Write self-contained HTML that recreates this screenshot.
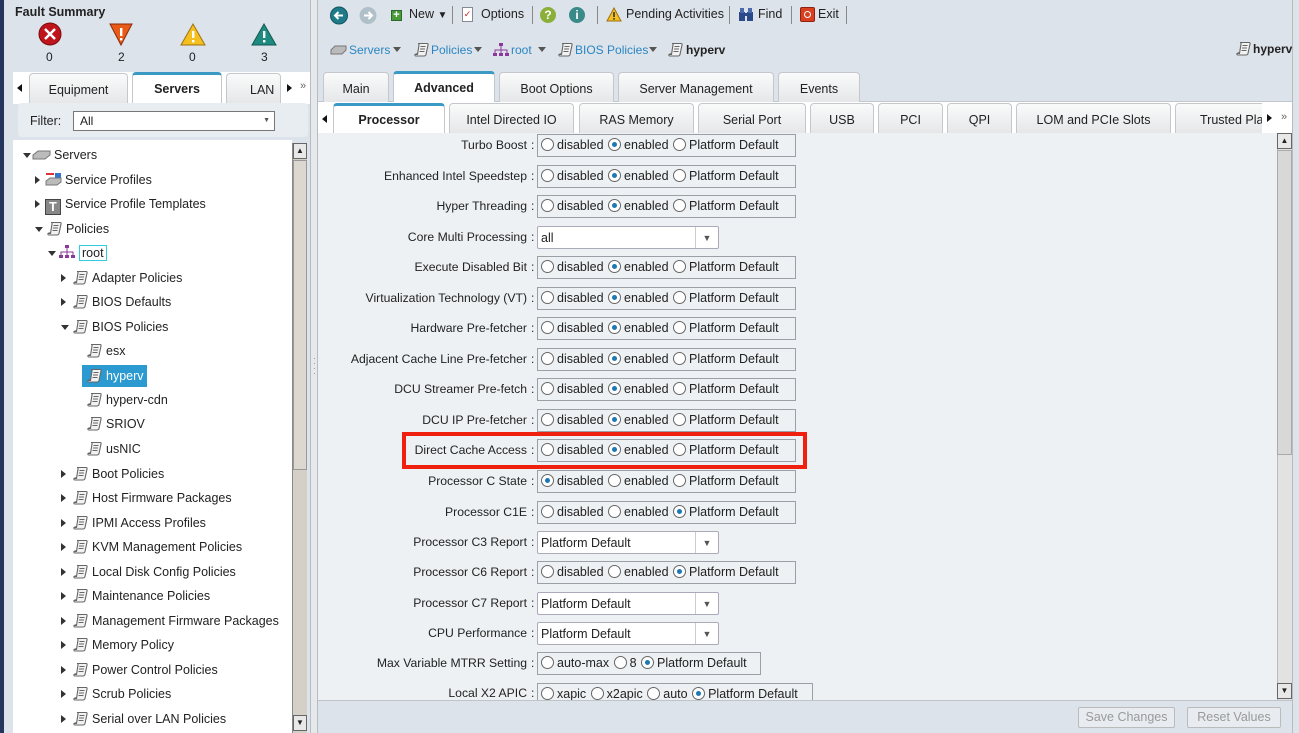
<!DOCTYPE html>
<html><head><meta charset="utf-8"><style>
*{box-sizing:border-box}
body{margin:0;width:1299px;height:733px;overflow:hidden;font-family:"Liberation Sans",sans-serif;font-size:12px;color:#222;background:#dde3ea;position:relative}
.a{position:absolute}
.tab{position:absolute;height:31px;border:1px solid #c4c8cc;border-bottom:none;border-radius:4px 4px 0 0;background:linear-gradient(#fafafa,#e4e6e8);text-align:center;line-height:32px;font-size:12.5px}
.tab.on{background:#fff;border-top:3px solid #3a9ac4;font-weight:bold;line-height:28px}
.ti{position:absolute;font-size:12.5px;height:20px;line-height:20px;white-space:nowrap}
.ar{display:inline-block;width:0;height:0;border-top:4px solid transparent;border-bottom:4px solid transparent;border-left:5px solid #333;position:absolute}
.ad{display:inline-block;width:0;height:0;border-left:4px solid transparent;border-right:4px solid transparent;border-top:5px solid #333;position:absolute}
.pi{display:inline-block;width:15px;height:15px;vertical-align:-3px;margin-right:4px}
.lb{position:absolute;right:772px;text-align:right;white-space:nowrap;font-size:12.2px}
.col{position:absolute;left:531px}
.bx{position:absolute;left:537px;height:23px;border:1px solid #9aa0a6;background:#eef1f4;white-space:nowrap;font-size:12.5px;line-height:21px;padding-left:2px}
.r{display:inline-block;width:13px;height:13px;border:1px solid #666;border-radius:50%;background:#fff;vertical-align:-2px;margin:0 3px 0 1px;position:relative}
.r.s:after{content:"";position:absolute;left:3px;top:3px;width:5px;height:5px;border-radius:50%;background:#1e78b4}
.sel{position:absolute;left:537px;width:182px;height:23px;border:1px solid #aab;background:#fff;border-radius:2px;font-size:12.5px;line-height:22px;padding-left:3px}
.sel:after{content:"▼";position:absolute;right:0;top:0;width:22px;height:21px;border-left:1px solid #ccc;font-size:9px;text-align:center;color:#555}
.tb{position:absolute;top:7px;font-size:12.5px;white-space:nowrap}
.sp{position:absolute;top:6px;width:1px;height:18px;background:#888}
.bc{position:absolute;top:43px;font-size:12px;color:#2a86c2;white-space:nowrap}
.dv{position:absolute;top:47px;border-left:4px solid transparent;border-right:4px solid transparent;border-top:5px solid #555}
</style></head><body>
<svg width="0" height="0" style="position:absolute"><defs>
<symbol id="sc" viewBox="0 0 15 15"><path d="M4 1.5H13Q14.5 1.5 14 3L12 12.5Q11.5 14 10 14H2Q0.5 14 1 12.5H3.5L5 3Q5.3 1.5 4 1.5Z" fill="#f2f2f2" stroke="#666" stroke-width="1.1"/><path d="M6.5 4.5H11.5M6 7H11M5.5 9.5H10.5M1 12.5Q3 11 3.5 12.5" stroke="#666" stroke-width="1" fill="none"/></symbol>
</defs></svg>
<!-- LEFT -->
<div class="a" style="left:0;top:0;width:4px;height:733px;background:#26355e"></div>
<div class="a" style="left:4px;top:0;width:306px;height:733px;background:#dce3ea"></div>
<div class="a" style="left:15px;top:5px;font-weight:bold;font-size:12.5px">Fault Summary</div>
<svg class="a" style="left:38px;top:22px" width="250" height="26">
<circle cx="12" cy="12" r="11" fill="#c0141c" stroke="#7a0a0e"/><path d="M7 7L17 17M17 7L7 17" stroke="#fff" stroke-width="2.5"/>
<path d="M72 2L94 2L83 23Z" fill="#e85a18" stroke="#8a2a08"/><rect x="82" y="6" width="2.4" height="8" fill="#fff"/><rect x="82" y="16" width="2.4" height="2.4" fill="#fff"/>
<path d="M155 2L167 23L143 23Z" fill="#f4c020" stroke="#a07010"/><rect x="154" y="9" width="2.4" height="7" fill="#fff"/><rect x="154" y="18" width="2.4" height="2.4" fill="#fff"/>
<path d="M226 2L238 23L214 23Z" fill="#1e8a80" stroke="#0e5a52"/><rect x="225" y="9" width="2.4" height="7" fill="#fff"/><rect x="225" y="18" width="2.4" height="2.4" fill="#fff"/>
</svg>
<div class="a" style="left:46px;top:50px">0</div><div class="a" style="left:118px;top:50px">2</div><div class="a" style="left:189px;top:50px">0</div><div class="a" style="left:261px;top:50px">3</div>
<div class="a" style="left:13px;top:72px;width:297px;height:32px;background:#fff"></div>
<span class="a" style="left:17px;top:84px;border-top:4px solid transparent;border-bottom:4px solid transparent;border-right:5px solid #111"></span>
<div class="tab" style="left:29px;top:73px;width:99px">Equipment</div>
<div class="tab on" style="left:132px;top:72px;width:90px">Servers</div>
<div class="tab" style="left:226px;top:73px;width:55px;text-align:left;padding-left:23px">LAN</div>
<span class="a" style="left:287px;top:84px;border-top:4px solid transparent;border-bottom:4px solid transparent;border-left:5px solid #111"></span>
<div class="a" style="left:300px;top:80px;font-size:11px;color:#666">»</div>
<div class="a" style="left:18px;top:103px;width:290px;height:34px;background:#e8edf1;border-radius:4px"></div>
<div class="a" style="left:30px;top:114px;font-size:12.5px">Filter:</div>
<div class="a" style="left:73px;top:111px;width:202px;height:20px;border:1px solid #777;background:#fff;padding-left:6px;line-height:18px">All<span style="position:absolute;right:4px;top:0;font-size:7px;color:#555">▼</span></div>
<div class="a" style="left:13px;top:140px;width:279px;height:593px;background:#fff"></div>
<div class="a" style="left:292px;top:143px;width:15px;height:590px;background:#d4d0c8;border-left:1px solid #888"></div>
<div class="a" style="left:293px;top:143px;width:14px;height:16px;background:#e8e8e8;border:1px solid #666;font-size:8px;text-align:center;line-height:14px">▲</div>
<div class="a" style="left:293px;top:160px;width:14px;height:310px;background:#dcd8d0;border:1px solid #999"></div>
<div class="a" style="left:293px;top:715px;width:14px;height:16px;background:#e8e8e8;border:1px solid #666;font-size:8px;text-align:center;line-height:14px">▼</div>
<div class="a" style="left:310px;top:0;width:8px;height:733px;background:#e6e9ec;border-left:1px solid #b8bcc0;border-right:1px solid #b8bcc0"></div>
<div class="a" style="left:313px;top:356px;font-size:8px;line-height:5px;color:#777">·<br>·<br>·<br>·</div>
<!-- tree -->
<span class="ad" style="left:23px;top:153px"></span>
<div class="ti" style="left:32px;top:145px"><svg width="19" height="12" style="vertical-align:-2px;margin-right:3px"><path d="M1 6L6 2L18 2L18 6L13 10L1 10Z" fill="#bbb" stroke="#777"/></svg>Servers</div>
<span class="ar" style="left:35px;top:176px"></span>
<div class="ti" style="left:45px;top:170px"><svg width="17" height="14" style="vertical-align:-2px;margin-right:3px"><rect x="1" y="1" width="8" height="2" fill="#d33"/><rect x="10" y="1" width="6" height="7" fill="#37c"/><path d="M1 9L5 6L16 6L16 10L12 13L1 13Z" fill="#bbb" stroke="#777"/></svg>Service Profiles</div>
<span class="ar" style="left:35px;top:200px"></span>
<div class="ti" style="left:45px;top:194px"><span style="display:inline-block;width:16px;height:16px;background:#888;color:#fff;border:1px solid #444;font-weight:bold;text-align:center;line-height:14px;vertical-align:-3px;margin-right:4px">T</span>Service Profile Templates</div>
<span class="ad" style="left:35px;top:227px"></span>
<div class="ti" style="left:47px;top:219px"><svg class="pi"><use href="#sc"/></svg>Policies</div>
<span class="ad" style="left:48px;top:251px"></span>
<div class="ti" style="left:59px;top:243px"><svg width="16" height="14" style="vertical-align:-2px;margin-right:4px"><g fill="#8a3a9a"><rect x="6" y="0" width="4" height="3"/><rect x="0" y="10" width="4" height="3"/><rect x="6" y="10" width="4" height="3"/><rect x="12" y="10" width="4" height="3"/></g><path d="M8 3V10M2 10V7H14V10" stroke="#8a3a9a" fill="none"/></svg><span style="border:1px solid #3cd;padding:0 2px">root</span></div>
<span class="ar" style="left:61px;top:274px"></span><div class="ti" style="left:73px;top:268px"><svg class="pi"><use href="#sc"/></svg>Adapter Policies</div>
<span class="ar" style="left:61px;top:298px"></span><div class="ti" style="left:73px;top:292px"><svg class="pi"><use href="#sc"/></svg>BIOS Defaults</div>
<span class="ad" style="left:61px;top:325px"></span><div class="ti" style="left:73px;top:317px"><svg class="pi"><use href="#sc"/></svg>BIOS Policies</div>
<div class="ti" style="left:87px;top:341px"><svg class="pi"><use href="#sc"/></svg>esx</div>
<div class="ti" style="left:82px;top:365px;width:65px;height:22px;background:#2a9ad0;color:#fff;padding-left:5px;line-height:22px"><svg class="pi"><use href="#sc"/></svg>hyperv</div>
<div class="ti" style="left:87px;top:390px"><svg class="pi"><use href="#sc"/></svg>hyperv-cdn</div>
<div class="ti" style="left:87px;top:414px"><svg class="pi"><use href="#sc"/></svg>SRIOV</div>
<div class="ti" style="left:87px;top:439px"><svg class="pi"><use href="#sc"/></svg>usNIC</div>
<span class="ar" style="left:61px;top:470px"></span><div class="ti" style="left:73px;top:464px"><svg class="pi"><use href="#sc"/></svg>Boot Policies</div>
<span class="ar" style="left:61px;top:494px"></span><div class="ti" style="left:73px;top:488px"><svg class="pi"><use href="#sc"/></svg>Host Firmware Packages</div>
<span class="ar" style="left:61px;top:519px"></span><div class="ti" style="left:73px;top:513px"><svg class="pi"><use href="#sc"/></svg>IPMI Access Profiles</div>
<span class="ar" style="left:61px;top:543px"></span><div class="ti" style="left:73px;top:537px"><svg class="pi"><use href="#sc"/></svg>KVM Management Policies</div>
<span class="ar" style="left:61px;top:568px"></span><div class="ti" style="left:73px;top:562px"><svg class="pi"><use href="#sc"/></svg>Local Disk Config Policies</div>
<span class="ar" style="left:61px;top:592px"></span><div class="ti" style="left:73px;top:586px"><svg class="pi"><use href="#sc"/></svg>Maintenance Policies</div>
<span class="ar" style="left:61px;top:617px"></span><div class="ti" style="left:73px;top:611px"><svg class="pi"><use href="#sc"/></svg>Management Firmware Packages</div>
<span class="ar" style="left:61px;top:641px"></span><div class="ti" style="left:73px;top:635px"><svg class="pi"><use href="#sc"/></svg>Memory Policy</div>
<span class="ar" style="left:61px;top:666px"></span><div class="ti" style="left:73px;top:660px"><svg class="pi"><use href="#sc"/></svg>Power Control Policies</div>
<span class="ar" style="left:61px;top:690px"></span><div class="ti" style="left:73px;top:684px"><svg class="pi"><use href="#sc"/></svg>Scrub Policies</div>
<span class="ar" style="left:61px;top:715px"></span><div class="ti" style="left:73px;top:709px"><svg class="pi"><use href="#sc"/></svg>Serial over LAN Policies</div>
<!-- RIGHT toolbar -->
<svg class="a" style="left:330px;top:6px" width="50" height="20"><circle cx="9" cy="9.5" r="8.5" fill="#1f7a8a" stroke="#135560"/><path d="M13 9.5H5M8.5 6L5 9.5L8.5 13" stroke="#fff" stroke-width="2" fill="none"/><circle cx="38" cy="9.5" r="8.5" fill="#b0c0c8"/><path d="M34 9.5H42M38.5 6L42 9.5L38.5 13" stroke="#fff" stroke-width="2" fill="none"/></svg>
<span class="a" style="left:391px;top:10px;width:11px;height:11px;background:#4a9a3a;border:1px solid #2a6a2a;color:#fff;font-size:11px;line-height:9px;text-align:center;font-weight:bold">+</span>
<div class="tb" style="left:409px">New <span style="font-size:10px">▼</span></div>
<div class="sp" style="left:452px"></div>
<span class="a" style="left:462px;top:7px;width:11px;height:15px;border:1px solid #889;background:#fff;font-size:9px;color:#c22;line-height:13px;text-align:center">✓</span>
<div class="tb" style="left:481px">Options</div>
<div class="sp" style="left:532px"></div>
<span class="a" style="left:540px;top:7px;width:16px;height:16px;border-radius:50%;background:#8ab03a;color:#fff;font-weight:bold;text-align:center;font-size:12px;line-height:16px">?</span>
<span class="a" style="left:569px;top:7px;width:16px;height:16px;border-radius:50%;background:#3a8a8a;color:#fff;font-weight:bold;text-align:center;font-size:12px;line-height:16px">i</span>
<div class="sp" style="left:597px"></div>
<svg class="a" style="left:606px;top:7px" width="16" height="15"><path d="M8 1L15 14H1Z" fill="#f4c020" stroke="#a07010"/><rect x="7.2" y="5" width="1.6" height="5" fill="#333"/><rect x="7.2" y="11" width="1.6" height="1.6" fill="#333"/></svg>
<div class="tb" style="left:626px">Pending Activities</div>
<div class="sp" style="left:729px"></div>
<svg class="a" style="left:738px;top:7px" width="16" height="15"><rect x="1" y="5" width="6" height="9" fill="#2a4a8a"/><rect x="9" y="5" width="6" height="9" fill="#2a4a8a"/><rect x="2" y="1" width="4" height="5" fill="#4a6aaa"/><rect x="10" y="1" width="4" height="5" fill="#4a6aaa"/><rect x="6" y="6" width="4" height="3" fill="#2a4a8a"/></svg>
<div class="tb" style="left:758px">Find</div>
<div class="sp" style="left:791px"></div>
<span class="a" style="left:800px;top:7px;width:15px;height:15px;background:#d84020;border:1px solid #902010;border-radius:2px"><span style="position:absolute;left:3px;top:3px;width:7px;height:7px;border:1.5px solid #fff;border-radius:50%"></span></span>
<div class="tb" style="left:818px">Exit</div>
<div class="sp" style="left:846px"></div>
<!-- breadcrumb -->
<svg class="a" style="left:330px;top:45px" width="17" height="10"><path d="M1 5L5 1L16 1L16 5L12 9L1 9Z" fill="#bbb" stroke="#777"/></svg>
<div class="bc" style="left:349px">Servers</div><span class="dv" style="left:393px"></span>
<svg class="a" style="left:414px;top:42px" width="15" height="15"><use href="#sc"/></svg>
<div class="bc" style="left:431px">Policies</div><span class="dv" style="left:474px"></span>
<svg class="a" style="left:493px;top:43px" width="16" height="14"><g fill="#8a3a9a"><rect x="6" y="0" width="4" height="3"/><rect x="0" y="10" width="4" height="3"/><rect x="6" y="10" width="4" height="3"/><rect x="12" y="10" width="4" height="3"/></g><path d="M8 3V10M2 10V7H14V10" stroke="#8a3a9a" fill="none"/></svg>
<div class="bc" style="left:511px">root</div><span class="dv" style="left:538px"></span>
<svg class="a" style="left:558px;top:42px" width="15" height="15"><use href="#sc"/></svg>
<div class="bc" style="left:575px">BIOS Policies</div><span class="dv" style="left:649px"></span>
<svg class="a" style="left:668px;top:42px" width="15" height="15"><use href="#sc"/></svg>
<div class="bc" style="left:686px;color:#222;font-weight:bold">hyperv</div>
<svg class="a" style="left:1236px;top:41px" width="15" height="15"><use href="#sc"/></svg>
<div class="a" style="left:1253px;top:42px;font-size:12px;font-weight:bold">hyperv</div>
<!-- tabs -->
<div class="a" style="left:318px;top:101px;width:974px;height:1px;background:#c4c8cc"></div>
<div class="tab" style="left:323px;top:72px;width:66px">Main</div>
<div class="tab on" style="left:393px;top:71px;width:102px">Advanced</div>
<div class="tab" style="left:499px;top:72px;width:115px">Boot Options</div>
<div class="tab" style="left:618px;top:72px;width:156px">Server Management</div>
<div class="tab" style="left:778px;top:72px;width:82px">Events</div>
<div class="a" style="left:318px;top:102px;width:974px;height:31px;background:#fff"></div>
<span class="a" style="left:322px;top:115px;border-top:4px solid transparent;border-bottom:4px solid transparent;border-right:5px solid #111"></span>
<div class="tab" style="left:333px;top:103px;width:112px;background:#fff;border-top:3px solid #3a9ac4;font-weight:bold;line-height:28px">Processor</div>
<div class="tab" style="left:449px;top:103px;width:125px">Intel Directed IO</div>
<div class="tab" style="left:579px;top:103px;width:115px">RAS Memory</div>
<div class="tab" style="left:698px;top:103px;width:108px">Serial Port</div>
<div class="tab" style="left:810px;top:103px;width:64px">USB</div>
<div class="tab" style="left:878px;top:103px;width:65px">PCI</div>
<div class="tab" style="left:947px;top:103px;width:65px">QPI</div>
<div class="tab" style="left:1016px;top:103px;width:155px">LOM and PCIe Slots</div>
<div class="tab" style="left:1175px;top:103px;width:120px;text-align:left;padding-left:24px;overflow:hidden">Trusted Pla</div>
<div class="a" style="left:1262px;top:103px;width:30px;height:30px;background:#fff"></div>
<span class="a" style="left:1267px;top:114px;border-top:4px solid transparent;border-bottom:4px solid transparent;border-left:5px solid #111"></span>
<div class="a" style="left:1281px;top:111px;font-size:11px;color:#666">»</div>
<!-- content -->
<div class="a" style="left:318px;top:133px;width:974px;height:567px;background:#eef1f4"></div>
<div class="a" style="left:1277px;top:133px;width:15px;height:567px;background:#e2e2e2;border-left:1px solid #bbb"></div>
<div class="a" style="left:1277px;top:133px;width:15px;height:16px;background:#e8e8e8;border:1px solid #666;font-size:8px;text-align:center;line-height:14px">▲</div>
<div class="a" style="left:1277px;top:150px;width:15px;height:305px;background:#d8d8d8;border:1px solid #aaa"></div>
<div class="a" style="left:1277px;top:683px;width:15px;height:16px;background:#e8e8e8;border:1px solid #666;font-size:8px;text-align:center;line-height:14px">▼</div>
<div class="a" style="left:1292px;top:0;width:7px;height:733px;background:#dde3ea;border-left:1px solid #bbb"></div>

<div class="lb" style="top:138px">Turbo Boost</div><div class="col" style="top:138px">:</div><div class="bx" style="top:134px;width:259px"><i class="r"></i>disabled <i class="r s"></i>enabled <i class="r"></i>Platform Default</div>
<div class="lb" style="top:169px">Enhanced Intel Speedstep</div><div class="col" style="top:169px">:</div><div class="bx" style="top:165px;width:259px"><i class="r"></i>disabled <i class="r s"></i>enabled <i class="r"></i>Platform Default</div>
<div class="lb" style="top:199px">Hyper Threading</div><div class="col" style="top:199px">:</div><div class="bx" style="top:195px;width:259px"><i class="r"></i>disabled <i class="r s"></i>enabled <i class="r"></i>Platform Default</div>
<div class="lb" style="top:230px">Core Multi Processing</div><div class="col" style="top:230px">:</div><div class="sel" style="top:226px">all</div>
<div class="lb" style="top:260px">Execute Disabled Bit</div><div class="col" style="top:260px">:</div><div class="bx" style="top:256px;width:259px"><i class="r"></i>disabled <i class="r s"></i>enabled <i class="r"></i>Platform Default</div>
<div class="lb" style="top:291px">Virtualization Technology (VT)</div><div class="col" style="top:291px">:</div><div class="bx" style="top:287px;width:259px"><i class="r"></i>disabled <i class="r s"></i>enabled <i class="r"></i>Platform Default</div>
<div class="lb" style="top:321px">Hardware Pre-fetcher</div><div class="col" style="top:321px">:</div><div class="bx" style="top:317px;width:259px"><i class="r"></i>disabled <i class="r s"></i>enabled <i class="r"></i>Platform Default</div>
<div class="lb" style="top:352px">Adjacent Cache Line Pre-fetcher</div><div class="col" style="top:352px">:</div><div class="bx" style="top:348px;width:259px"><i class="r"></i>disabled <i class="r s"></i>enabled <i class="r"></i>Platform Default</div>
<div class="lb" style="top:382px">DCU Streamer Pre-fetch</div><div class="col" style="top:382px">:</div><div class="bx" style="top:378px;width:259px"><i class="r"></i>disabled <i class="r s"></i>enabled <i class="r"></i>Platform Default</div>
<div class="lb" style="top:413px">DCU IP Pre-fetcher</div><div class="col" style="top:413px">:</div><div class="bx" style="top:409px;width:259px"><i class="r"></i>disabled <i class="r s"></i>enabled <i class="r"></i>Platform Default</div>
<div class="lb" style="top:443px">Direct Cache Access</div><div class="col" style="top:443px">:</div><div class="bx" style="top:439px;width:259px"><i class="r"></i>disabled <i class="r s"></i>enabled <i class="r"></i>Platform Default</div>
<div class="a" style="left:402px;top:432px;width:405px;height:37px;border:4px solid #f0200e"></div>
<div class="lb" style="top:474px">Processor C State</div><div class="col" style="top:474px">:</div><div class="bx" style="top:470px;width:259px"><i class="r s"></i>disabled <i class="r"></i>enabled <i class="r"></i>Platform Default</div>
<div class="lb" style="top:505px">Processor C1E</div><div class="col" style="top:505px">:</div><div class="bx" style="top:501px;width:259px"><i class="r"></i>disabled <i class="r"></i>enabled <i class="r s"></i>Platform Default</div>
<div class="lb" style="top:535px">Processor C3 Report</div><div class="col" style="top:535px">:</div><div class="sel" style="top:531px">Platform Default</div>
<div class="lb" style="top:565px">Processor C6 Report</div><div class="col" style="top:565px">:</div><div class="bx" style="top:561px;width:259px"><i class="r"></i>disabled <i class="r"></i>enabled <i class="r s"></i>Platform Default</div>
<div class="lb" style="top:596px">Processor C7 Report</div><div class="col" style="top:596px">:</div><div class="sel" style="top:592px">Platform Default</div>
<div class="lb" style="top:626px">CPU Performance</div><div class="col" style="top:626px">:</div><div class="sel" style="top:622px">Platform Default</div>
<div class="lb" style="top:656px">Max Variable MTRR Setting</div><div class="col" style="top:656px">:</div><div class="bx" style="top:652px;width:224px"><i class="r"></i>auto-max <i class="r"></i>8 <i class="r s"></i>Platform Default</div>
<div class="lb" style="top:686px">Local X2 APIC</div><div class="col" style="top:686px">:</div><div class="bx" style="top:683px;width:276px;height:17px;border-bottom:none"><i class="r"></i>xapic <i class="r"></i>x2apic <i class="r"></i>auto <i class="r s"></i>Platform Default</div>
<!-- bottom -->
<div class="a" style="left:318px;top:700px;width:974px;height:33px;background:#dde3ea;border-top:1px solid #c0c4c8"></div>
<div class="a" style="left:1078px;top:707px;width:97px;height:21px;border:1px solid #bbb;border-radius:2px;background:#e8ecf0;color:#999;text-align:center;line-height:19px;font-size:12.5px">Save Changes</div>
<div class="a" style="left:1187px;top:707px;width:94px;height:21px;border:1px solid #bbb;border-radius:2px;background:#e8ecf0;color:#999;text-align:center;line-height:19px;font-size:12.5px">Reset Values</div>
</body></html>
